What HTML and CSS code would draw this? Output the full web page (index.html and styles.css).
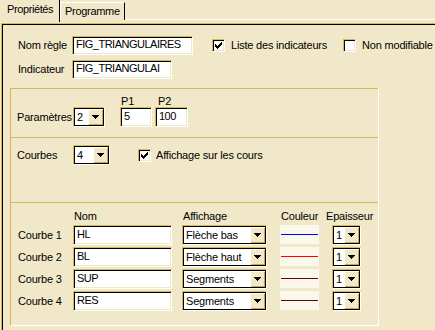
FILE: index.html
```html
<!DOCTYPE html>
<html>
<head>
<meta charset="utf-8">
<link rel="stylesheet" href="styles.css">
</head>
<body>
<div class="tabs">
  <div class="tab tab-active">Propriétés</div>
  <div class="tab">Programme</div>
  <div class="tab-rest"></div>
</div>
<div class="panel">
  <div class="panel-inner">
    <div class="top">
      <div class="row">
        <span class="lbl">Nom règle</span>
        <div class="edit h19 w121">FIG_TRIANGULAIRES</div>
        <div class="chk ml19"><span class="box"><svg width="7" height="7" viewBox="0 0 7 7" shape-rendering="crispEdges"><path d="M6 0h1v3h-1v1h-1v1h-1v1h-1v1h-1v-1h-1v-1h-1v-3h1v1h1v1h1v-1h1v-1h1z" fill="#000"/></svg></span>Liste des indicateurs</div>
        <div class="chk ml16"><span class="box"></span>Non modifiable</div>
      </div>
      <div class="row">
        <span class="lbl">Indicateur</span>
        <div class="edit h19 w100">FIG_TRIANGULAI</div>
      </div>
    </div>
    <div class="group">
      <div class="sec sec-params">
        <div class="slbl">Paramètres</div>
        <div class="combo w32"><span class="val">2</span><span class="btn"><svg width="7" height="4" viewBox="0 0 7 4" shape-rendering="crispEdges"><path d="M0 0h7v1h-1v1h-1v1h-1v1h-1v-1h-1v-1h-1v-1h-1z" fill="#000"/></svg></span></div>
        <div class="pcol ml15"><div class="phead">P1</div><div class="edit w32">5</div></div>
        <div class="pcol ml3"><div class="phead p2">P2</div><div class="edit w33">100</div></div>
      </div>
      <div class="sec sec-curves">
        <div class="slbl">Courbes</div>
        <div class="combo w37"><span class="val">4</span><span class="btn"><svg width="7" height="4" viewBox="0 0 7 4" shape-rendering="crispEdges"><path d="M0 0h7v1h-1v1h-1v1h-1v1h-1v-1h-1v-1h-1v-1h-1z" fill="#000"/></svg></span></div>
        <div class="chk ml28"><span class="box"><svg width="7" height="7" viewBox="0 0 7 7" shape-rendering="crispEdges"><path d="M6 0h1v3h-1v1h-1v1h-1v1h-1v1h-1v-1h-1v-1h-1v-3h1v1h1v1h1v-1h1v-1h1z" fill="#000"/></svg></span>Affichage sur les cours</div>
      </div>
      <div class="sec sec-table">
        <div></div>
        <div class="th">Nom</div>
        <div class="th">Affichage</div>
        <div class="th">Couleur</div>
        <div class="th th-ep">Epaisseur</div>

        <div class="rlbl">Courbe 1</div>
        <div class="edit w99">HL</div>
        <div class="combo w85"><span class="val">Flèche bas</span><span class="btn"><svg width="7" height="4" viewBox="0 0 7 4" shape-rendering="crispEdges"><path d="M0 0h7v1h-1v1h-1v1h-1v1h-1v-1h-1v-1h-1v-1h-1z" fill="#000"/></svg></span></div>
        <div class="swatch"><span class="line c-blue"></span></div>
        <div class="combo w29"><span class="val">1</span><span class="btn"><svg width="7" height="4" viewBox="0 0 7 4" shape-rendering="crispEdges"><path d="M0 0h7v1h-1v1h-1v1h-1v1h-1v-1h-1v-1h-1v-1h-1z" fill="#000"/></svg></span></div>

        <div class="rlbl">Courbe 2</div>
        <div class="edit w99">BL</div>
        <div class="combo w85"><span class="val">Flèche haut</span><span class="btn"><svg width="7" height="4" viewBox="0 0 7 4" shape-rendering="crispEdges"><path d="M0 0h7v1h-1v1h-1v1h-1v1h-1v-1h-1v-1h-1v-1h-1z" fill="#000"/></svg></span></div>
        <div class="swatch"><span class="line c-red"></span></div>
        <div class="combo w29"><span class="val">1</span><span class="btn"><svg width="7" height="4" viewBox="0 0 7 4" shape-rendering="crispEdges"><path d="M0 0h7v1h-1v1h-1v1h-1v1h-1v-1h-1v-1h-1v-1h-1z" fill="#000"/></svg></span></div>

        <div class="rlbl">Courbe 3</div>
        <div class="edit w99">SUP</div>
        <div class="combo w85"><span class="val">Segments</span><span class="btn"><svg width="7" height="4" viewBox="0 0 7 4" shape-rendering="crispEdges"><path d="M0 0h7v1h-1v1h-1v1h-1v1h-1v-1h-1v-1h-1v-1h-1z" fill="#000"/></svg></span></div>
        <div class="swatch"><span class="line c-dark"></span></div>
        <div class="combo w29"><span class="val">1</span><span class="btn"><svg width="7" height="4" viewBox="0 0 7 4" shape-rendering="crispEdges"><path d="M0 0h7v1h-1v1h-1v1h-1v1h-1v-1h-1v-1h-1v-1h-1z" fill="#000"/></svg></span></div>

        <div class="rlbl">Courbe 4</div>
        <div class="edit w99">RES</div>
        <div class="combo w85"><span class="val">Segments</span><span class="btn"><svg width="7" height="4" viewBox="0 0 7 4" shape-rendering="crispEdges"><path d="M0 0h7v1h-1v1h-1v1h-1v1h-1v-1h-1v-1h-1v-1h-1z" fill="#000"/></svg></span></div>
        <div class="swatch"><span class="line c-dark"></span></div>
        <div class="combo w29"><span class="val">1</span><span class="btn"><svg width="7" height="4" viewBox="0 0 7 4" shape-rendering="crispEdges"><path d="M0 0h7v1h-1v1h-1v1h-1v1h-1v-1h-1v-1h-1v-1h-1z" fill="#000"/></svg></span></div>
      </div>
    </div>
  </div>
</div>
</body>
</html>
```
FILE: styles.css
```css
* { box-sizing: border-box; }
html, body { margin: 0; padding: 0; }
body {
  background: #F1E8C9;
  font-family: "Liberation Sans", Arial, sans-serif;
  font-size: 11px;
  line-height: 13px;
  letter-spacing: -0.2px;
  color: #000;
  width: 435px;
  height: 330px;
  overflow: hidden;
}

/* tabs */
.tabs { display: flex; height: 23px; }
.tab {
  height: 18px;
  margin-top: 2px;
  padding: 2px 4px 0 4px;
  border-top: 1px solid #fff;
  border-left: 1px solid #fff;
  border-right: 1px solid #000;
  white-space: nowrap;
  letter-spacing: -0.3px;
}
.tab-active {
  width: 60px;
  height: 22px;
  margin-top: 0;
  padding: 3px 0 0 7px;
  border-top: none;
  border-left: none;
  letter-spacing: -0.4px;
}
.tab-rest { flex: 1; height: 20px; border-bottom: 1px solid #fff; }

/* panel */
.panel {
  margin-left: 1px;
  height: 307px;
  border-top: 1px solid #D6B85A;
  border-left: 1px solid #D6B85A;
}
.panel-inner {
  height: 100%;
  border-top: 1px solid #000;
  border-left: 1px solid #000;
}

.top { padding: 11px 0 0 15px; display: flex; flex-direction: column; gap: 5px; }
.row { display: flex; align-items: center; height: 19px; }
.lbl { width: 54px; white-space: nowrap; }

/* sunken controls */
.edit {
  height: 20px;
  background: #fff;
  border: 1px solid;
  border-color: #D6B85A #fff #fff #D6B85A;
  box-shadow: inset 1px 1px #000, inset -1px -1px #F1E8C9;
  padding: 1px 2px 0 3px;
  line-height: 15px;
  letter-spacing: -0.5px;
  white-space: nowrap;
  overflow: hidden;
}
.h19 { height: 19px; padding-top: 0; }

.combo {
  display: flex;
  height: 20px;
  background: #fff;
  border: 1px solid;
  border-color: #D6B85A #fff #fff #D6B85A;
  box-shadow: inset 1px 1px #000, inset -1px -1px #000;
  padding: 1px;
}
.combo .val { flex: 1; padding: 1px 0 0 2px; line-height: 15px; white-space: nowrap; overflow: hidden; }
.combo .btn {
  width: 15px;
  background: #F1E8C9;
  box-shadow: inset 1px 1px #FFFDF4, inset -1px -1px #C9A94F;
  display: flex;
  align-items: center;
  justify-content: center;
}
.combo .btn svg { display: block; }

.chk { display: flex; align-items: center; gap: 6px; white-space: nowrap; }
.box {
  width: 13px;
  height: 13px;
  flex: none;
  background: #fff;
  border: 1px solid;
  border-color: #D6B85A #fff #fff #D6B85A;
  box-shadow: inset 1px 1px #000, inset -1px -1px #F1E8C9;
  display: flex;
  align-items: center;
  justify-content: center;
}
.box svg { display: block; }

.w121 { width: 121px; flex: none; }
.w100 { width: 100px; flex: none; }
.w99 { width: 99px; }
.w85 { width: 85px; }
.w37 { width: 37px; flex: none; }
.w33 { width: 33px; }
.w32 { width: 32px; flex: none; }
.w29 { width: 29px; }
.ml19 { margin-left: 19px; }
.ml16 { margin-left: 16px; }
.ml28 { margin-left: 28px; }
.ml15 { margin-left: 15px; }
.ml3 { margin-left: 3px; }

/* group */
.group {
  margin: 9px 0 0 7px;
  width: 369px;
  border-left: 1px solid #D6B85A;
  border-right: 1px solid #fff;
  border-bottom: 1px solid #fff;
}
.sec { border-top: 1px solid #D6B85A; }
.slbl { width: 56px; flex: none; height: 20px; line-height: 20px; white-space: nowrap; }

.sec-params { display: flex; align-items: flex-end; padding: 6px 0 10px 6px; }
.pcol { display: flex; flex-direction: column; }
.phead { height: 12px; line-height: 13px; padding-left: 1px; }
.phead.p2 { padding-left: 3px; }

.sec-curves { display: flex; align-items: center; padding: 7px 0 37px 6px; }
.sec-curves .chk { gap: 5px; }

.sec-table {
  display: grid;
  grid-template-columns: 56px 109px 98px 52px 29px;
  grid-template-rows: 13px repeat(4, 20px);
  row-gap: 2px;
  padding: 7px 0 14px 6px;
}
.th { padding-left: 1px; white-space: nowrap; }
.th-ep { margin-left: -7px; }
.rlbl { align-self: center; padding-left: 1px; white-space: nowrap; }

.swatch {
  width: 39px;
  height: 19px;
  background: #FAF8EA;
  display: flex;
  align-items: center;
  padding: 0 1px;
}
.line { display: block; height: 1px; width: 100%; }
.c-blue { background: #0000FF; }
.c-red { background: #FF0000; }
.c-dark { background: #6A0000; }
```
